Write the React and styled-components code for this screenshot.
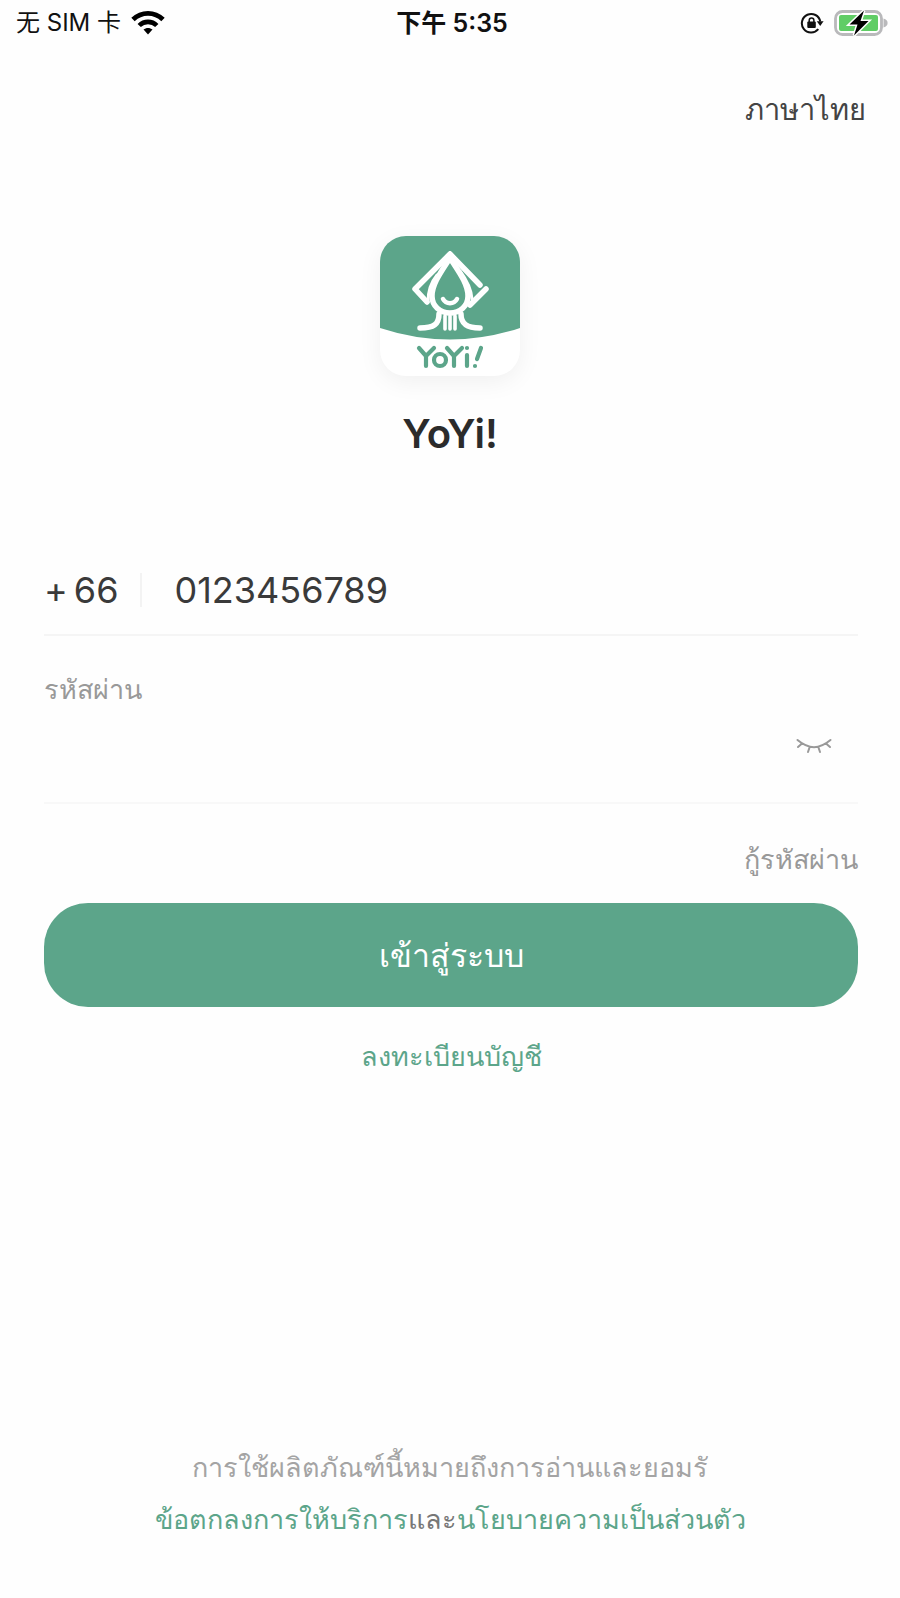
import React from "react";
import styled, { createGlobalStyle } from "styled-components";
import { useState } from "react";

const green = "#5ca58a";

const App = () => {
  const [phone, setPhone] = useState("0123456789");
  const [password, setPassword] = useState("");
  const [showPassword, setShowPassword] = useState(false);

  return (
    <Page>
      <GlobalStyle />

      <StatusBar>
        <StatusSide>
          <span>无 SIM 卡</span>
          <WifiIcon />
        </StatusSide>
        <Clock>下午 5:35</Clock>
        <StatusSide $end>
          <RotationLockIcon />
          <BatteryIcon />
        </StatusSide>
      </StatusBar>

      <LanguageButton type="button">ภาษาไทย</LanguageButton>

      <Brand>
        <Logo />
        <Title>YoYi!</Title>
      </Brand>

      <Form onSubmit={(e) => e.preventDefault()}>
        <PhoneRow>
          <CountryCode htmlFor="phone">
            <span>+</span>
            <span>66</span>
          </CountryCode>
          <Divider />
          <Field
            id="phone"
            type="tel"
            value={phone}
            onChange={(e) => setPhone(e.target.value)}
          />
        </PhoneRow>

        <PasswordLabel htmlFor="password">รหัสผ่าน</PasswordLabel>
        <PasswordRow>
          <Field
            id="password"
            type={showPassword ? "text" : "password"}
            value={password}
            onChange={(e) => setPassword(e.target.value)}
          />
          <EyeButton
            type="button"
            aria-label="แสดงรหัสผ่าน"
            onClick={() => setShowPassword(!showPassword)}
          >
            <ClosedEyeIcon />
          </EyeButton>
        </PasswordRow>

        <ForgotLink href="#forgot">กู้รหัสผ่าน</ForgotLink>
        <LoginButton type="submit">เข้าสู่ระบบ</LoginButton>
        <RegisterLink href="#register">ลงทะเบียนบัญชี</RegisterLink>
      </Form>

      <Footer>
        <p>การใช้ผลิตภัณฑ์นี้หมายถึงการอ่านและยอมรั</p>
        <Terms>
          <GreenLink href="#terms">ข้อตกลงการให้บริการ</GreenLink>และ
          <GreenLink href="#privacy">นโยบายความเป็นส่วนตัว</GreenLink>
        </Terms>
      </Footer>
    </Page>
  );
};

// =============================================
// icons

const WifiIcon = () => (
  <svg width="34" height="26" viewBox="0 0 34 26" fill="none" stroke="#000">
    <path d="M2 9.500C10.500 1.200 23.500 1.200 32 9.500" strokeWidth="4.800" />
    <path d="M8.200 15.500C13 10.600 21 10.600 25.800 15.500" strokeWidth="4.600" />
    <path d="M12.500 19.600C15 17.300 19 17.300 21.500 19.600L17 24.500Z" fill="#000" stroke="none" />
  </svg>
);

const RotationLockIcon = () => (
  <svg width="24" height="24" viewBox="0 0 24 24" fill="none">
    <path
      d="M18.300 18.200A9.300 9.300 0 1 1 20.300 10.500"
      stroke="#111"
      strokeWidth="2"
    />
    <path d="M16.800 10.300H23.600L20.200 15Z" fill="#111" />
    <rect x="7.300" y="10.500" width="8.500" height="6.500" rx="1" fill="#111" />
    <path d="M9.200 11V9.300a2.350 2.350 0 0 1 4.700 0V11" stroke="#111" strokeWidth="1.500" />
  </svg>
);

const BatteryIcon = () => (
  <svg width="54" height="28" viewBox="0 0 54 28">
    <rect x="1.500" y="2.500" width="46" height="23" rx="7" fill="#fff" stroke="#b9b9bb" strokeWidth="2.800" />
    <path d="M49.500 9.500c5.500 1 5.500 8 0 9Z" fill="#b9b9bb" />
    <rect x="5" y="6" width="39" height="16" rx="2" fill="#60cd66" />
    <path
      d="M30 1.500 15.500 15.500H23.500L20 26.500 34.500 12H26.500Z"
      fill="#000"
      stroke="#fff"
      strokeWidth="3"
      paintOrder="stroke"
    />
  </svg>
);

const ClosedEyeIcon = () => (
  <svg
    width="36"
    height="16"
    viewBox="0 0 36 16"
    fill="none"
    stroke="#999"
    strokeWidth="2"
    strokeLinecap="round"
  >
    <path d="M1.500 2C13 11.500 23 11.500 34.500 2M6 5.500 2 9M30 5.500 34 9M13.500 9.500 12 14M22.500 9.500 24 14" />
  </svg>
);

const Logo = () => (
  <LogoTile viewBox="0 0 140 140" role="img" aria-label="YoYi!">
    <path d="M0 0H140V92Q70 115 0 92Z" fill={green} />
    <g fill="none" stroke="#fff" strokeWidth="5.500" strokeLinecap="round" strokeLinejoin="round">
      <path d="M70 18 35 53 47 66M70 18 100 49M106 53 90 69" />
      <path d="M70 22C61 36 52 48 52 60C52 70 60 77 70 77C80 77 88 70 88 60C88 48 79 36 70 22Z" />
      <path d="M57 39C52 45 48 54 48 66M80 35C86 43 91 51 92 63" strokeWidth="3" />
      <path d="M63 63C66 68.500 74 68.500 77 63" strokeWidth="4.500" />
      <path d="M59 78C59 88 54 92 40 92M81 78C81 88 87 92 100 92" />
      <path d="M65 80V93M70 80V93M75 80V93" strokeWidth="3.600" />
    </g>
    <g fill="none" stroke={green} strokeWidth="4.200" strokeLinecap="round" strokeLinejoin="round">
      <path d="M39 112 46 120 54 112M46 120V130" />
      <circle cx="60" cy="124" r="6" />
      <path d="M67 112 74 120 82 112M74 120V130M87 119V130M87 112V112" />
      <path d="M101 112 97 123M95 130V130" />
    </g>
  </LogoTile>
);

// =============================================
// styles

const GlobalStyle = createGlobalStyle`
  * {
    box-sizing: border-box;
  }

  body {
    margin: 0;
    background: #fefefe;
    color: #333;
    font-family: Inter, "Noto Sans CJK SC", sans-serif;
  }

  p,
  h1 {
    margin: 0;
  }

  a {
    text-decoration: none;
  }

  button {
    border: 0;
    padding: 0;
    background: none;
    font: inherit;
    cursor: pointer;
  }
`;

const Page = styled.main`
  min-height: 100vh;
  display: flex;
  flex-direction: column;
`;

const StatusBar = styled.header`
  display: grid;
  grid-template-columns: 1fr auto 1fr;
  align-items: center;
  height: 46px;
  padding: 0 12px 0 16px;
  color: #111;
  font-size: 24px;
  line-height: 32px;
`;

const StatusSide = styled.div`
  display: flex;
  align-items: center;
  gap: 10px;
  justify-content: ${({ $end }) => ($end ? "flex-end" : "flex-start")};
`;

const Clock = styled.time`
  font-size: 25px;
  font-weight: 600;
`;

const LanguageButton = styled.button`
  align-self: flex-end;
  margin: 42px 34px 0 0;
  color: #444;
  font-size: 29px;
  line-height: 44px;
`;

const Brand = styled.div`
  display: flex;
  flex-direction: column;
  align-items: center;
  gap: 32px;
  margin-top: 104px;
`;

const LogoTile = styled.svg`
  width: 140px;
  height: 140px;
  border-radius: 26px;
  background: #fff;
  box-shadow: 0 6px 24px rgba(0, 0, 0, 0.06);
`;

const Title = styled.h1`
  color: #2b2b2b;
  font-size: 40px;
  font-weight: 600;
  line-height: 52px;
`;

const Form = styled.form`
  display: flex;
  flex-direction: column;
  margin: 86px 42px 0 44px;
`;

const PhoneRow = styled.div`
  display: flex;
  align-items: center;
  height: 90px;
  border-bottom: 2px solid #f5f5f5;
  color: #3a3a3a;
  font-size: 36px;
`;

const CountryCode = styled.label`
  display: flex;
  gap: 6px;
`;

const Divider = styled.span`
  width: 2px;
  height: 34px;
  margin: 0 32px 0 22px;
  background: #f3f3f3;
`;

const Field = styled.input`
  flex: 1;
  min-width: 0;
  padding: 0;
  border: 0;
  outline: none;
  background: none;
  color: #3a3a3a;
  font: inherit;
  font-size: 36px;
`;

const PasswordLabel = styled.label`
  margin-top: 34px;
  color: #999;
  font-size: 27px;
  line-height: 40px;
`;

const PasswordRow = styled.div`
  display: flex;
  align-items: center;
  height: 94px;
  padding: 0 26px 20px 0;
  border-bottom: 2px solid #f8f8f8;
`;

const EyeButton = styled.button`
  display: flex;
`;

const ForgotLink = styled.a`
  align-self: flex-end;
  margin-top: 36px;
  color: #999;
  font-size: 27px;
  line-height: 40px;
`;

const LoginButton = styled.button`
  height: 104px;
  margin-top: 23px;
  border-radius: 44px;
  background: ${green};
  color: #fff;
  font-size: 32px;
`;

const RegisterLink = styled.a`
  align-self: center;
  margin-top: 30px;
  color: ${green};
  font-size: 27px;
  line-height: 40px;
`;

const Footer = styled.footer`
  margin-top: auto;
  padding-bottom: 52px;
  color: #a4a4a4;
  font-size: 27px;
  line-height: 52px;
  text-align: center;
`;

const Terms = styled.p`
  color: #777;
`;

const GreenLink = styled.a`
  color: ${green};
`;

export default App;
